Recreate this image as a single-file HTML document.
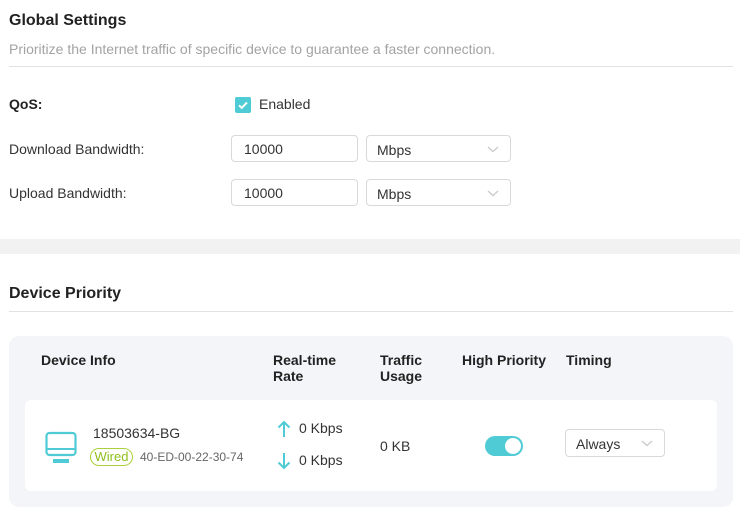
<!DOCTYPE html>
<html><head><style>
*{box-sizing:border-box;margin:0;padding:0}
body{width:740px;height:514px;background:#fff;font-family:"Liberation Sans",Arial,sans-serif;color:#333;position:relative;overflow:hidden;font-size:14px}
.a{position:absolute}
h2{position:absolute;font-size:16px;font-weight:bold;color:#222}
.line{position:absolute;left:9px;right:7px;height:1px;background:#e2e2e2}
.lbl{position:absolute;left:9px;font-size:14px;color:#333}
.inp{position:absolute;width:127px;height:27px;border:1px solid #d9d9d9;border-radius:4px;padding:5px 0 0 12px;font-size:14px;color:#333}
.sel{position:absolute;width:145px;height:27px;border:1px solid #d9d9d9;border-radius:4px;padding:6px 0 0 10px;font-size:14px;color:#333}
.chev{position:absolute;right:10px;top:6px}
.th{position:absolute;font-size:14px;font-weight:bold;color:#222;line-height:16px}
</style></head><body>
<h2 style="left:9px;top:12px">Global Settings</h2>
<div class="a" style="left:9px;top:41px;font-size:14px;color:#a3a3a3">Prioritize the Internet traffic of specific device to guarantee a faster connection.</div>
<div class="line" style="top:66px"></div>
<div class="lbl" style="top:96px;font-weight:bold;color:#222">QoS:</div>
<div class="a" style="left:235px;top:97px;width:16px;height:16px;background:#4ecbd5;border-radius:2px"><svg width="16" height="16"><path d="M4 8.3l2.7 2.5L12 5.5" stroke="#fff" stroke-width="2" fill="none"/></svg></div>
<div class="a" style="left:259px;top:96px;font-size:14px;color:#333">Enabled</div>
<div class="lbl" style="top:141px">Download Bandwidth:</div>
<div class="inp" style="left:231px;top:135px">10000</div>
<div class="sel" style="left:366px;top:135px">Mbps<svg class="chev" width="14" height="14"><path d="M2 5l5 4.5L12 5" stroke="#ccc" stroke-width="1.4" fill="none"/></svg></div>
<div class="lbl" style="top:185px">Upload Bandwidth:</div>
<div class="inp" style="left:231px;top:179px">10000</div>
<div class="sel" style="left:366px;top:179px">Mbps<svg class="chev" width="14" height="14"><path d="M2 5l5 4.5L12 5" stroke="#ccc" stroke-width="1.4" fill="none"/></svg></div>
<div class="a" style="left:0;top:239px;width:740px;height:15px;background:#f2f2f2"></div>
<h2 style="left:9px;top:285px">Device Priority</h2>
<div class="line" style="top:311px"></div>
<div class="a" style="left:9px;top:336px;width:724px;height:171px;background:#f4f5f9;border-radius:10px"></div>
<div class="th" style="left:41px;top:352px">Device Info</div>
<div class="th" style="left:273px;top:352px">Real-time<br>Rate</div>
<div class="th" style="left:380px;top:352px">Traffic<br>Usage</div>
<div class="th" style="left:462px;top:352px">High Priority</div>
<div class="th" style="left:566px;top:352px">Timing</div>
<div class="a" style="left:25px;top:400px;width:692px;height:91px;background:#fff;border-radius:6px"></div>
<svg class="a" style="left:45px;top:431px" width="34" height="34"><rect x="1.5" y="2" width="29" height="22" rx="3" fill="none" stroke="#4ecbd5" stroke-width="2.2"/><line x1="2" y1="18" x2="30" y2="18" stroke="#4ecbd5" stroke-width="2"/><rect x="8" y="28" width="16" height="4" fill="#4ecbd5"/></svg>
<div class="a" style="left:93px;top:425px;font-size:14px;color:#333">18503634-BG</div>
<div class="a" style="left:90px;top:448px;width:43px;height:18px;border:1px solid #a9d13b;border-radius:9px;color:#8fbf1e;font-size:13px;line-height:16px;text-align:center">Wired</div>
<div class="a" style="left:140px;top:450px;font-size:12px;color:#666">40-ED-00-22-30-74</div>
<svg class="a" style="left:277px;top:420px" width="14" height="18"><path d="M7 17V2M1.5 7.5L7 2l5.5 5.5" stroke="#4ecbd5" stroke-width="2" fill="none"/></svg>
<div class="a" style="left:299px;top:420px;font-size:14px;color:#333">0 Kbps</div>
<svg class="a" style="left:277px;top:452px" width="14" height="18"><path d="M7 1v15M1.5 10.5L7 16l5.5-5.5" stroke="#4ecbd5" stroke-width="2" fill="none"/></svg>
<div class="a" style="left:299px;top:452px;font-size:14px;color:#333">0 Kbps</div>
<div class="a" style="left:380px;top:438px;font-size:14px;color:#333">0 KB</div>
<div class="a" style="left:485px;top:436px;width:38px;height:20px;background:#4ecbd5;border-radius:10px"><div class="a" style="right:2px;top:2px;width:16px;height:16px;background:#fff;border-radius:50%"></div></div>
<div class="a" style="left:565px;top:429px;width:100px;height:28px;border:1px solid #d9d9d9;border-radius:4px;padding:6px 0 0 10px;font-size:14px;color:#333">Always<svg class="chev" style="top:6px" width="14" height="14"><path d="M2 5l5 4.5L12 5" stroke="#ccc" stroke-width="1.4" fill="none"/></svg></div>
</body></html>
